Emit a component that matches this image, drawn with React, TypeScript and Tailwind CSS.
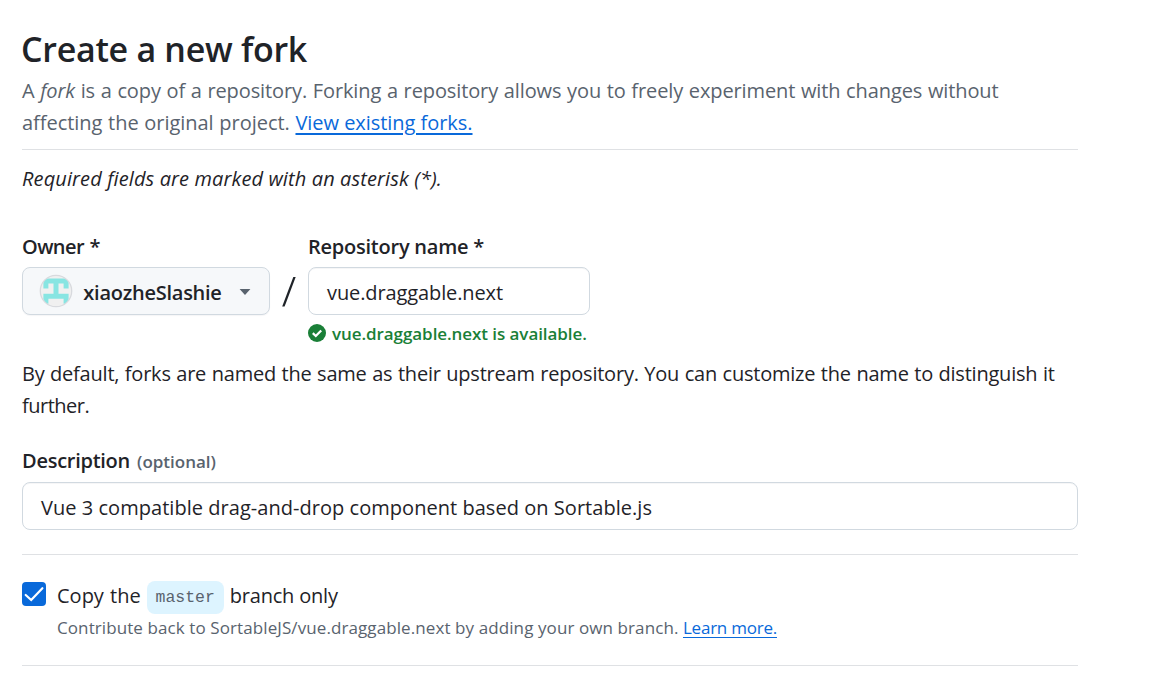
function Identicon() {
  return (
    <svg width="34" height="34" viewBox="0 0 34 34" className="shrink-0">
      <defs>
        <clipPath id="avatar">
          <circle cx="17" cy="17" r="15.5" />
        </clipPath>
      </defs>
      <circle cx="17" cy="17" r="16" fill="#f0f0f0" />
      <path
        clipPath="url(#avatar)"
        fill="#88e5e2"
        d="M4.4 4.6H29.6V14.6H24.6V9.6H19.5V19.7H29.6V29.7H24.6V24.7H9.4V29.7H4.4V19.7H14.5V9.6H9.4V14.6H4.4Z"
      />
      <circle cx="17" cy="17" r="15.7" fill="none" stroke="#d8dade" strokeWidth="1.3" />
    </svg>
  );
}

export default function App() {
  return (
    <main className="h-[674px] w-[1078px] overflow-hidden bg-white pl-[22px] pt-[25px] font-['Open_Sans','Noto_Sans',sans-serif] text-[20px] leading-8 text-[#1f2328]">
      <h1 className="-ml-px text-[34px] font-semibold leading-[48px] tracking-[-0.29px]">
        Create a new fork
      </h1>
      <p className="mt-0.5 whitespace-nowrap border-b border-[#dfe1e4] pb-[10px] text-[#59636e]">
        <span className="tracking-[-0.11px] [word-spacing:0.6px]">
          A <em>fork</em> is a copy of a repository. Forking a repository allows you to freely experiment with changes
          without
        </span>
        <br />
        <span className="tracking-[-0.04px] [word-spacing:0.6px]">affecting the original project. </span>
        <a
          href="#forks"
          className="tracking-[-0.045px] text-[#0969da] underline decoration-2 underline-offset-[3px]"
        >
          View existing forks.
        </a>
      </p>
      <p className="mt-[13px] whitespace-nowrap italic tracking-[0.117px]">
        Required fields are marked with an asterisk (*).
      </p>

      <div className="mt-9 flex">
        <div className="w-[248px]">
          <label className="block font-semibold tracking-[-0.6px] [word-spacing:1px]">Owner *</label>
          <button className="mt-1 flex h-12 w-[248px] items-center rounded-lg border border-[#d1d9e0] bg-[#f6f8fa] pl-4 font-semibold shadow-[0_1px_1px_rgba(31,35,40,0.04)]">
            <Identicon />
            <span className="ml-[10px] mt-[3px] w-[139px] tracking-[-0.26px]">xiaozheSlashie</span>
            <svg width="12" height="6" viewBox="0 0 12 6" className="ml-[17px] mt-0.5">
              <path d="M0.6 0H11.4L6 6Z" fill="#59636e" />
            </svg>
          </button>
        </div>
        <div className="flex w-[38px] justify-center pt-[45px]">
          <svg width="16" height="32" viewBox="0 0 16 32">
            <path d="M12.3 1H14.7L3.6 30.5H1.2Z" fill="#1f2328" />
          </svg>
        </div>
        <div className="w-[282px]">
          <label className="block whitespace-nowrap font-semibold tracking-[-0.234px]">Repository name *</label>
          <div className="mt-1 flex h-12 items-center rounded-lg border border-[#d1d9e0] pl-[18px] pt-1 tracking-[-0.109px] shadow-[inset_0_1px_0_rgba(31,35,40,0.04)]">
            vue.draggable.next
          </div>
          <div className="mt-[7px] flex h-6 items-center whitespace-nowrap text-[17px] font-semibold leading-6 tracking-[-0.07px] text-[#1a7f37]">
            <svg width="18" height="18" viewBox="0 0 12 12" className="mr-[6px] shrink-0 -translate-y-px">
              <circle cx="6" cy="6" r="6" fill="#1a7f37" />
              <path d="M3.2 6.1L5.2 8L8.8 4.3" fill="none" stroke="#fff" strokeWidth="1.5" />
            </svg>
            vue.draggable.next is available.
          </div>
        </div>
      </div>

      <p className="mt-3 whitespace-nowrap">
        <span className="tracking-[-0.22px] [word-spacing:0.6px]">
          By default, forks are named the same as their upstream repository. You can customize the name to distinguish
          it
        </span>
        <br />
        <span className="tracking-[-0.5px]">further.</span>
      </p>

      <div className="mt-[23px] h-8 whitespace-nowrap">
        <label className="font-semibold tracking-[-0.264px]">Description</label>
        <span className="ml-[7px] text-[17px] font-semibold text-[#59636e]">(optional)</span>
      </div>
      <div className="mt-[5px] flex h-12 items-center rounded-lg border border-[#d1d9e0] pl-[18px] pt-1 tracking-[0.039px] shadow-[inset_0_1px_0_rgba(31,35,40,0.04)]">
        Vue 3 compatible drag-and-drop component based on Sortable.js
      </div>

      <div className="mt-6 flex h-28 items-start border-y border-[#dfe1e4] pt-6">
        <span className="mt-[3px] flex size-6 shrink-0 items-center justify-center rounded-[4px] bg-[#0969da]">
          <svg width="24" height="24" viewBox="0 0 24 24">
            <path d="M3.7 13L9.2 18L20.4 6.2" fill="none" stroke="#fff" strokeWidth="2.2" strokeLinecap="round" />
          </svg>
        </span>
        <div className="ml-[11px] whitespace-nowrap">
          <div className="mt-px flex h-8 items-center">
            <span className="[word-spacing:1px]">Copy the</span>
            <code className="ml-[6px] mt-[3px] h-[33px] w-[77px] rounded-lg bg-[#ddf4ff] text-center font-['Liberation_Mono',monospace] text-[16.5px] leading-[33px] text-[#59636e]">
              master
            </code>
            <span className="ml-[6px] tracking-[-0.2px]">branch only</span>
          </div>
          <p className="mt-1 text-[17px] leading-6 tracking-[0.092px] text-[#59636e]">
            Contribute back to SortableJS/vue.draggable.next by adding your own branch.{" "}
            <a
              href="#learn"
              className="tracking-[-0.235px] text-[#0969da] underline decoration-1 underline-offset-[3px]"
            >
              Learn more.
            </a>
          </p>
        </div>
      </div>
    </main>
  );
}
